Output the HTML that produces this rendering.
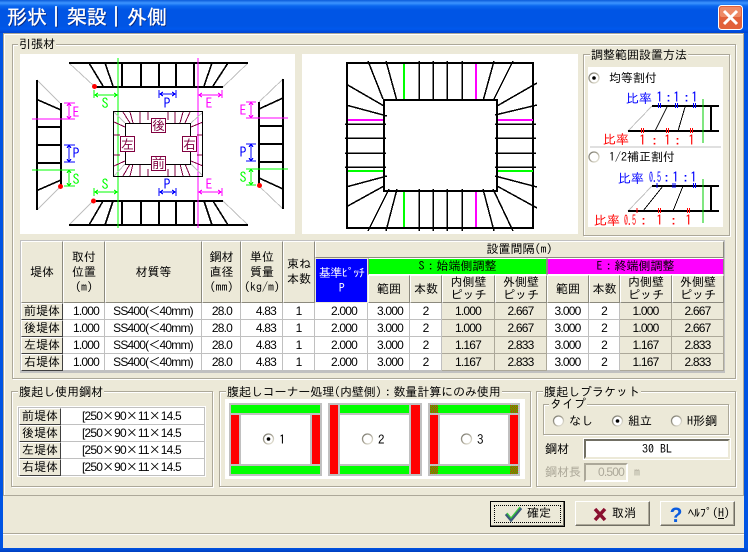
<!DOCTYPE html>
<html lang="ja"><head><meta charset="utf-8"><title>形状 | 架設 | 外側</title>
<style>
html,body{margin:0;padding:0;background:#ece9d8}
#w{position:relative;width:748px;height:552px;overflow:hidden;background:#ece9d8;font:12px/13px "IPAGothic","Noto Sans CJK JP",sans-serif;color:#000}
#w div,#w span{position:absolute;box-sizing:border-box}
#w td span,#w .st{position:static}
.tb{left:0;top:0;width:748px;height:33px;background:linear-gradient(#0a5bda 0,#3d95ff 3px,#0a66ee 6px,#0055e5 10px,#0055e5 26px,#0059ee 29px,#0043cf 33px)}
.t{color:#fff;font-size:20px;line-height:22px;top:6px;text-shadow:1px 1px 0 #0a2a80;white-space:nowrap;-webkit-text-stroke:.35px #fff}
.bar{-webkit-text-stroke:.3px #fff}
.g{border:1px solid #aca899;box-shadow:1px 1px 0 #fff,inset 1px 1px 0 #fff}
.l{background:#ece9d8;white-space:nowrap;padding:0 1px;line-height:13px}
.h{background:#ece9d8;border:1px solid;border-color:#fff #8c8a7e #8c8a7e #fff;display:flex;align-items:center;justify-content:center;text-align:center;line-height:15px}
.n{font-family:"Liberation Sans",sans-serif;letter-spacing:-.8px}
.b{background:#ece9d8;border:1px solid;border-color:#fff #716f64 #716f64 #fff;box-shadow:inset -1px -1px 0 #aca899;display:flex;align-items:center;justify-content:center}
table{position:absolute;border-collapse:separate;border-spacing:0;table-layout:fixed;font-size:12px}
td{padding:0;height:16px;line-height:16px;background:#fff;border-right:1px solid #c0c0c0;border-bottom:1px solid #c0c0c0;text-align:center;font-family:"Liberation Sans",sans-serif;letter-spacing:-.8px;white-space:nowrap;overflow:hidden}
td.s{background:#ece9d8;border-color:#aca899}
td.f{background:#ece9d8;border:1px solid;border-color:#fff #404040 #404040 #fff;height:15px;font-family:"IPAGothic",sans-serif;line-height:15px;letter-spacing:0}
td.r{text-align:right}
.x{font-family:"IPAGothic",sans-serif;font-size:12px;letter-spacing:0}
.u{text-decoration:underline}
svg path,svg rect{shape-rendering:crispEdges}
svg text{font-family:"IPAGothic",sans-serif}
svg text.d{font-size:14px}
svg text.c{font-size:13px}
</style></head><body><div id="w">
<div class="tb"></div>
<div class="t" style="left:7px">形状</div><div class="t bar" style="left:51px">|</div>
<div class="t" style="left:67px">架設</div><div class="t bar" style="left:111px">|</div>
<div class="t" style="left:127px">外側</div>
<div style="left:0;top:33px;width:3px;height:519px;background:#0054e3"></div>
<div style="left:744px;top:33px;width:4px;height:519px;background:#0054e3"></div>
<div style="left:0;top:548px;width:748px;height:4px;background:linear-gradient(#0054e3,#0040c0)"></div>
<div style="left:3px;top:33px;width:741px;height:463px;border:1px solid #aca899;box-shadow:1px 1px 0 #fff inset"></div>
<div style="left:3px;top:533px;width:741px;height:2px;background:#aca899;border-bottom:1px solid #fff"></div>

<div class="g" style="left:12px;top:44px;width:724px;height:335px"></div>
<div class="l" style="left:18px;top:38px">引張材</div>
<div style="left:20px;top:54px;width:275px;height:180px;background:#fff"></div>
<div style="left:302px;top:54px;width:276px;height:180px;background:#fff"></div>
<div class="g" style="left:583px;top:54px;width:147px;height:182px"></div>
<div class="l" style="left:590px;top:49px">調整範囲設置方法</div>
<div style="left:588px;top:67px;width:135px;height:160px;background:#fff"></div>
<span style="left:609px;top:72px">均等割付</span>
<span style="left:609px;top:151px">1/2補正割付</span>

<!-- table header -->
<div style="left:20px;top:240px;width:705px;height:133px;background:#c0c0c0"></div>
<div class="h" style="left:21px;top:241px;width:42px;height:62px">堤体</div>
<div class="h" style="left:63px;top:241px;width:42px;height:62px">取付<br>位置<br>(m)</div>
<div class="h" style="left:105px;top:241px;width:97px;height:62px">材質等</div>
<div class="h" style="left:202px;top:241px;width:39px;height:62px">鋼材<br>直径<br>(mm)</div>
<div class="h" style="left:241px;top:241px;width:42px;height:62px">単位<br>質量<br>(kg/m)</div>
<div class="h" style="left:283px;top:241px;width:32px;height:62px">束ね<br>本数</div>
<div class="h" style="left:315px;top:241px;width:409px;height:17px">設置間隔(m)</div>
<div class="h" style="left:315px;top:258px;width:53px;height:45px;background:#00f;color:#fff;border:1px solid #ece9d8;font-size:12px;letter-spacing:-.5px">基準ﾋﾟｯﾁ<br>P</div>
<div class="h" style="left:368px;top:258px;width:179px;height:17px;background:#0f0;border-color:#fff #8c8a7e">S：始端側調整</div>
<div class="h" style="left:547px;top:258px;width:177px;height:17px;background:#f0f;border-color:#fff #8c8a7e">E：終端側調整</div>
<div class="h" style="left:368px;top:275px;width:42px;height:28px">範囲</div>
<div class="h" style="left:410px;top:275px;width:32px;height:28px">本数</div>
<div class="h" style="left:442px;top:275px;width:53px;height:28px;line-height:13px">内側壁<br>ピッチ</div>
<div class="h" style="left:495px;top:275px;width:52px;height:28px;line-height:13px">外側壁<br>ピッチ</div>
<div class="h" style="left:547px;top:275px;width:42px;height:28px">範囲</div>
<div class="h" style="left:589px;top:275px;width:31px;height:28px">本数</div>
<div class="h" style="left:620px;top:275px;width:52px;height:28px;line-height:13px">内側壁<br>ピッチ</div>
<div class="h" style="left:672px;top:275px;width:52px;height:28px;line-height:13px">外側壁<br>ピッチ</div>

<table style="left:21px;top:303px;width:703px">
<colgroup><col style="width:42px"><col style="width:42px"><col style="width:97px"><col style="width:39px"><col style="width:42px"><col style="width:32px"><col style="width:53px"><col style="width:42px"><col style="width:32px"><col style="width:53px"><col style="width:52px"><col style="width:42px"><col style="width:31px"><col style="width:52px"><col style="width:52px"></colgroup>
<tr><td class="f">前堤体</td><td class="r" style="padding-right:5px">1.000</td><td>SS400(＜40mm)</td><td class="r" style="padding-right:8px">28.0</td><td class="r" style="padding-right:6px">4.83</td><td>1</td><td class="r" style="padding-right:10px">2.000</td><td class="r" style="padding-right:6px">3.000</td><td>2</td><td class="s">1.000</td><td class="s">2.667</td><td>3.000</td><td>2</td><td class="s">1.000</td><td class="s">2.667</td></tr>
<tr><td class="f">後堤体</td><td class="r" style="padding-right:5px">1.000</td><td>SS400(＜40mm)</td><td class="r" style="padding-right:8px">28.0</td><td class="r" style="padding-right:6px">4.83</td><td>1</td><td class="r" style="padding-right:10px">2.000</td><td class="r" style="padding-right:6px">3.000</td><td>2</td><td class="s">1.000</td><td class="s">2.667</td><td>3.000</td><td>2</td><td class="s">1.000</td><td class="s">2.667</td></tr>
<tr><td class="f">左堤体</td><td class="r" style="padding-right:5px">1.000</td><td>SS400(＜40mm)</td><td class="r" style="padding-right:8px">28.0</td><td class="r" style="padding-right:6px">4.83</td><td>1</td><td class="r" style="padding-right:10px">2.000</td><td class="r" style="padding-right:6px">3.000</td><td>2</td><td class="s">1.167</td><td class="s">2.833</td><td>3.000</td><td>2</td><td class="s">1.167</td><td class="s">2.833</td></tr>
<tr><td class="f">右堤体</td><td class="r" style="padding-right:5px">1.000</td><td>SS400(＜40mm)</td><td class="r" style="padding-right:8px">28.0</td><td class="r" style="padding-right:6px">4.83</td><td>1</td><td class="r" style="padding-right:10px">2.000</td><td class="r" style="padding-right:6px">3.000</td><td>2</td><td class="s">1.167</td><td class="s">2.833</td><td>3.000</td><td>2</td><td class="s">1.167</td><td class="s">2.833</td></tr>
</table>

<!-- bottom groups -->
<div class="g" style="left:11px;top:391px;width:202px;height:96px"></div>
<div class="l" style="left:18px;top:386px">腹起し使用鋼材</div>
<div style="left:17px;top:406px;width:189px;height:71px;background:#fff"></div>
<table style="left:18px;top:407px;width:186px;border-top:1px solid #c0c0c0;border-left:1px solid #c0c0c0">
<colgroup><col style="width:42px"><col style="width:144px"></colgroup>
<tr><td class="f">前堤体</td><td style="text-align:left;padding-left:21px">[250<span class="x">×</span>90<span class="x">×</span>11<span class="x">×</span>14.5</td></tr>
<tr><td class="f">後堤体</td><td style="text-align:left;padding-left:21px">[250<span class="x">×</span>90<span class="x">×</span>11<span class="x">×</span>14.5</td></tr>
<tr><td class="f">左堤体</td><td style="text-align:left;padding-left:21px">[250<span class="x">×</span>90<span class="x">×</span>11<span class="x">×</span>14.5</td></tr>
<tr><td class="f">右堤体</td><td style="text-align:left;padding-left:21px">[250<span class="x">×</span>90<span class="x">×</span>11<span class="x">×</span>14.5</td></tr>
</table>
<div class="g" style="left:219px;top:391px;width:312px;height:96px"></div>
<div style="left:225px;top:399px;width:300px;height:80px;background:#fff"></div>
<div class="l" style="left:226px;top:386px;letter-spacing:-.1px">腹起しコーナー処理(内壁側)：数量計算にのみ使用</div>
<div class="g" style="left:536px;top:391px;width:200px;height:96px"></div>
<div class="l" style="left:543px;top:386px">腹起しブラケット</div>
<div class="g" style="left:543px;top:404px;width:186px;height:31px"></div>
<div class="l" style="left:549px;top:398px">タイプ</div>
<span style="left:569px;top:415px">なし</span><span style="left:628px;top:415px">組立</span><span style="left:687px;top:415px">H形鋼</span>
<span style="left:545px;top:443px">鋼材</span>
<div style="left:584px;top:439px;width:146px;height:20px;background:#fff;border:2px solid;border-color:#716f64 #ece9d8 #ece9d8 #716f64;outline:1px solid #fff;text-align:center;line-height:16px">30 BL</div>
<span style="left:545px;top:466px;color:#aca899">鋼材長</span>
<div style="left:584px;top:463px;width:44px;height:19px;background:#ece9d8;border:2px solid;border-color:#aca899 #fff #fff #aca899;text-align:right;padding-right:2px;line-height:15px;color:#aca899" class="n">0.500</div>
<span style="left:634px;top:466px;color:#aca899">m</span>

<!-- buttons -->
<div class="b" style="left:490px;top:501px;width:75px;height:26px;border:1px solid #000;box-shadow:inset -1px -1px 0 #716f64"></div>
<div style="left:494px;top:505px;width:67px;height:18px;border:1px dotted #000"></div>
<span style="left:527px;top:507px">確定</span>
<div class="b" style="left:575px;top:501px;width:75px;height:25px"></div>
<span style="left:612px;top:507px">取消</span>
<div class="b" style="left:660px;top:501px;width:75px;height:25px"></div>
<span style="left:688px;top:507px;white-space:nowrap">ﾍﾙﾌﾟ(<span class="u st">H</span>)</span>

<svg width="748" height="552" viewBox="0 0 748 552" style="position:absolute;left:0;top:0" fill="none">
<defs><pattern id="ck" width="2" height="2" patternUnits="userSpaceOnUse"><rect width="2" height="2" fill="#f00"/><rect width="1" height="1" fill="#0f0"/><rect x="1" y="1" width="1" height="1" fill="#0f0"/></pattern>
<linearGradient id="rg" x1="0" y1="0" x2="1" y2="1"><stop offset="0" stop-color="#76756c"/><stop offset=".5" stop-color="#aca899"/><stop offset="1" stop-color="#f1efe2"/></linearGradient></defs>
<!-- close -->
<rect x="718.5" y="5.5" width="24" height="24" rx="3" fill="#e2613a" stroke="#fff" style="shape-rendering:auto"/>
<rect x="720" y="7" width="21" height="10" rx="2" fill="#ee8a66" style="shape-rendering:auto"/>
<path d="M724 11L737 24M737 11L724 24" stroke="#fff" stroke-width="3" style="shape-rendering:auto"/>

<!-- diagram 1 -->
<g stroke="#c0c0c0"><path d="M69 63L94 86M248 63L223 87M69 225L93 201M248 225L223 201M37 80L60 103M37 210L60 187M283 79L259 102M283 209L259 186"/></g>
<g stroke="#000" stroke-width="2">
<path d="M69 63H248M95 87H223M96 201H223M69 225H248"/>
<path d="M122 63V86M141 63V86M159 63V86M176 63V86M194 63V86M122 225V201M141 225V201M159 225V201M176 225V201M194 225V201"/>
<path d="M37 80V210M61 103V187M37 127H61M37 145H61M37 163H61"/>
<path d="M283 79V209M259 102V186M259 126H283M259 144H283M259 162H283"/>
</g>
<g stroke="#000" stroke-width="1.600"><path d="M89 63L103 86M105 63L113 86M212 63L204 86M228 63L213 86M89 225L103 201M105 225L113 201M212 225L204 201M228 225L213 201M37 99.500L61 110M37 190.500L61 180M283 98L259 109M283 189L259 178"/></g>
<g stroke="#0f0"><path d="M118 58V228M32 170H64M247 169H288"/>
<path d="M94 90V98M118 90V98M95 95H117M94 188V196M118 188V196M95 192H117M69 170V186M64 186H75M64 170H75M251 169V185M246 169H256M246 185H256"/>
<path d="M98 93L95 95L98 97M114 93L117 95L114 97M98 190L95 192L98 194M114 190L117 192L114 194M67 173L69 170L71 173M67 183L69 186L71 183M249 172L251 169L253 172M249 182L251 185L253 182"/></g>
<g stroke="#f0f"><path d="M198 58V228M32 119H64M247 118H288"/>
<path d="M198 90V98M222 90V98M199 95H221M198 188V196M222 188V196M199 192H221M69 103V119M64 103H75M64 119H75M251 102V118M246 102H256M246 118H256"/>
<path d="M202 93L199 95L202 97M218 93L221 95L218 97M202 190L199 192L202 194M218 190L221 192L218 194M67 106L69 103L71 106M67 116L69 119L71 116M249 105L251 102L253 105M249 115L251 118L253 115"/></g>
<g stroke="#00f"><path d="M159 90V98M176 90V98M160 94H175M159 188V196M176 188V196M160 192H175M69 145V162M64 145H75M64 162H75M251 144V161M246 144H256M246 161H256"/>
<path d="M163 92L160 94L163 96M172 92L175 94L172 96M163 190L160 192L163 194M172 190L175 192L172 194M67 148L69 145L71 148M67 159L69 162L71 159M249 147L251 144L253 147M249 158L251 161L253 158"/></g>
<g fill="#f00"><circle cx="94.500" cy="86.500" r="2.500"/><circle cx="93.500" cy="201" r="2.500"/><circle cx="60.500" cy="186.500" r="2.500"/><circle cx="259.500" cy="185.500" r="2.500"/></g>
<g text-anchor="middle">
<text class="d" x="105" y="108" fill="#0f0">S</text><text class="d" x="105" y="189" fill="#0f0">S</text><text class="d" x="76" y="184" fill="#0f0">S</text><text class="d" x="243" y="182" fill="#0f0">S</text>
<text class="d" x="167" y="108" fill="#00f">P</text><text class="d" x="167" y="189" fill="#00f">P</text><text class="d" x="76" y="158" fill="#00f">P</text><text class="d" x="243" y="157" fill="#00f">P</text>
<text class="d" x="209" y="108" fill="#f0f">E</text><text class="d" x="209" y="189" fill="#f0f">E</text><text class="d" x="76" y="117" fill="#f0f">E</text><text class="d" x="243" y="115" fill="#f0f">E</text></g>
<!-- center key -->
<path d="M114 112L125 123M203 112L191 123M114 176L125 164M203 176L191 164" stroke="#c0c0c0"/>
<g stroke="#800040"><path d="M123 112L130 123M130 112L133 123M140 112V123M148 112V120M168 112V120M175 112V123M183 112L180 123M190 112L185 123"/>
<path d="M123 176L130 164M130 176L133 164M140 176V164M148 176V169M168 176V169M175 176V164M183 176L180 164M190 176L185 164"/>
<path d="M114 122L125 127M114 135H120M114 155H120M114 166L125 161M203 122L191 127M203 135H197M203 155H197M203 166L191 161"/></g>
<rect x="113.500" y="111.500" width="89" height="65" stroke="#000"/>
<rect x="125.500" y="123.500" width="65" height="41" stroke="#000"/>
<g fill="#fff" stroke="#800040"><rect x="151.500" y="118.500" width="14" height="14"/><rect x="151.500" y="156.500" width="14" height="14"/><rect x="120.500" y="136.500" width="14" height="15"/><rect x="182.500" y="136.500" width="14" height="15"/></g>
<g font-size="13" text-anchor="middle" fill="#800040"><text x="158.500" y="130">後</text><text x="158.500" y="168">前</text><text x="127.500" y="149">左</text><text x="189.500" y="149">右</text></g>

<!-- diagram 2 -->
<g stroke="#000" stroke-width="1.500">
<path d="M368 61L383 99M386 61L397 101M494 61L483 101M513 61L493 101"/>
<path d="M368 231L389 189M386 231L397 189M494 231L483 189M513 231L493 189"/>
<path d="M346 84L384 106M346 105L387 116M346 207L384 186M346 187L387 176"/>
<path d="M537 83L497 106M537 105L495 115M537 208L497 186M537 187L495 176"/>
<path d="M419 61V101M433 61V101M447 61V101M462 61V101M419 231V189M433 231V189M447 231V189M462 231V189M345 124H386M345 138H386M345 153H386M345 167H386M495 124H536M495 138H536M495 153H536M495 167H536"/></g>
<rect x="347" y="63" width="186" height="165" stroke="#000" stroke-width="2"/>
<rect x="384" y="100" width="113" height="91" stroke="#000" stroke-width="2"/>
<path d="M404 64V99M404 192V227M348 171H383M498 171H533" stroke="#0f0" stroke-width="2"/>
<path d="M476 64V99M476 192V227M348 120H383M498 120H533" stroke="#f0f" stroke-width="2"/>

<!-- adjust diagrams -->
<path d="M590 147H721" stroke="#c0c0c0"/>
<path d="M652 106L628 131M652 186L628 211" stroke="#c0c0c0"/>
<path d="M652 106H719M628 131H719M711 106V131M652 186H719M628 211H719M711 186V211" stroke="#000" stroke-width="2"/>
<path d="M667 107L655 131M685 107L678 131M663 186L643 211M683 186L673 211" stroke="#000"/>
<path d="M703 99V143M703 179V223" stroke="#0c0"/>
<path d="M658.500 103V108M660.500 103V108M675.500 103V108M677.500 103V108M693.500 103V108M695.500 103V108M657 183V188M673 183V188M675 183V188M693.500 183V188M695.500 183V188" stroke="#00f"/>
<path d="M641.500 128V133M643.500 128V133M666.500 128V133M668.500 128V133M690.500 128V133M692.500 128V133M637 208V213M658.500 208V213M660.500 208V213M687.500 208V213M689.500 208V213" stroke="#f00"/>
<g fill="#00f"><text class="c" x="626" y="103">比率</text><text class="d" x="656" y="102">1</text><text class="d" x="665" y="102">:</text><text class="d" x="673" y="102">1</text><text class="d" x="683" y="102">:</text><text class="d" x="691" y="102">1</text>
<text class="c" x="618" y="183">比率</text><text class="d" x="649" y="182" textLength="12" lengthAdjust="spacingAndGlyphs">0.5</text><text class="d" x="663" y="182">:</text><text class="d" x="672" y="182">1</text><text class="d" x="682" y="182">:</text><text class="d" x="690" y="182">1</text></g>
<g fill="#f00"><text class="c" x="603" y="144">比率</text><text class="d" x="639" y="145">1</text><text class="d" x="651" y="145">:</text><text class="d" x="664" y="145">1</text><text class="d" x="674" y="145">:</text><text class="d" x="688" y="145">1</text>
<text class="c" x="594" y="225">比率</text><text class="d" x="624" y="225" textLength="12" lengthAdjust="spacingAndGlyphs">0.5</text><text class="d" x="640" y="225">:</text><text class="d" x="656" y="225">1</text><text class="d" x="670" y="225">:</text><text class="d" x="685" y="225">1</text></g>

<!-- corner cards -->
<g>
<rect x="229" y="403" width="93" height="73" fill="#c0c0c0"/><rect x="231" y="405" width="89" height="8" fill="#0f0"/><rect x="231" y="466" width="89" height="8" fill="#0f0"/><rect x="231" y="415" width="8" height="49" fill="#f00"/><rect x="312" y="415" width="8" height="49" fill="#f00"/><rect x="241" y="415" width="69" height="49" fill="#fff"/>
<rect x="328" y="403" width="94" height="73" fill="#c0c0c0"/><rect x="330" y="405" width="8" height="69" fill="#f00"/><rect x="411" y="405" width="9" height="69" fill="#f00"/><rect x="340" y="405" width="69" height="8" fill="#0f0"/><rect x="340" y="466" width="69" height="8" fill="#0f0"/><rect x="340" y="415" width="69" height="49" fill="#fff"/>
<rect x="428" y="403" width="92" height="73" fill="#c0c0c0"/><rect x="430" y="405" width="88" height="8" fill="#0f0"/><rect x="430" y="466" width="88" height="8" fill="#0f0"/><rect x="430" y="415" width="8" height="49" fill="#f00"/><rect x="510" y="415" width="8" height="49" fill="#f00"/><rect x="440" y="415" width="68" height="49" fill="#fff"/><rect x="430" y="405" width="8" height="8" fill="url(#ck)"/><rect x="510" y="405" width="8" height="8" fill="url(#ck)"/><rect x="430" y="466" width="8" height="8" fill="url(#ck)"/><rect x="510" y="466" width="8" height="8" fill="url(#ck)"/>
</g>
<g font-size="13" fill="#000"><text x="279" y="444">1</text><text x="378" y="444">2</text><text x="477" y="444">3</text></g>

<!-- radios -->
<g fill="#fff" stroke="url(#rg)" stroke-width="1.300"><circle cx="594" cy="78" r="5"/><circle cx="594" cy="157" r="5"/><circle cx="268.500" cy="439" r="5"/><circle cx="367.500" cy="439" r="5"/><circle cx="466.500" cy="439" r="5"/><circle cx="558.500" cy="421" r="5"/><circle cx="617.500" cy="421" r="5"/><circle cx="676.500" cy="421" r="5"/></g>
<g fill="#000"><circle cx="594" cy="78" r="1.800"/><circle cx="268.500" cy="439" r="1.800"/><circle cx="617.500" cy="421" r="1.800"/></g>

<!-- button icons -->
<g>
<path d="M506 514L511 520L521 508" stroke="#3c5a7a" stroke-width="3" style="shape-rendering:auto"/>
<path d="M507 513L511 518L520 507" stroke="#39c83c" stroke-width="1.300" style="shape-rendering:auto"/>
<path d="M595 509L605 520M605 509L595 520" stroke="#8a1030" stroke-width="3.500" style="shape-rendering:auto"/>
<text x="676" y="522" font-size="21" font-weight="bold" fill="#0a5ce0" text-anchor="middle" style="font-family:'Liberation Sans',sans-serif">?</text>
</g>
</svg>
</div></body></html>
